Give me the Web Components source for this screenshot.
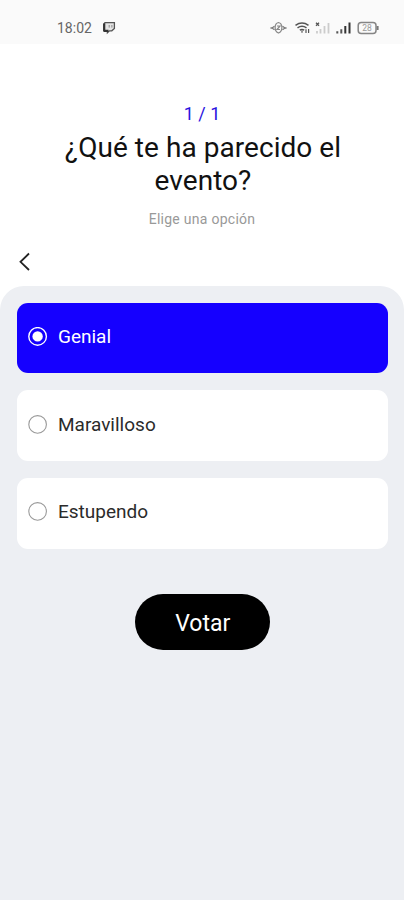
<!DOCTYPE html>
<html lang="es">
<head>
<meta charset="utf-8">
<title>Votación</title>
<style>
    body {
        margin: 0;
        background: #fff;
        color: #111;
        font-family: Roboto, "Liberation Sans", sans-serif;
    }
</style>
</head>
<body>
<poll-screen>
    <status-bar slot="status">18:02</status-bar>
    <poll-header slot="header">
        <span slot="count">1 / 1</span>
        <span slot="title">¿Qué te ha parecido el evento?</span>
        <span slot="hint">Elige una opción</span>
    </poll-header>
    <poll-option selected>Genial</poll-option>
    <poll-option>Maravilloso</poll-option>
    <poll-option>Estupendo</poll-option>
    <vote-button slot="action">Votar</vote-button>
</poll-screen>

<script>
customElements.define('poll-screen', class extends HTMLElement {
    constructor() {
        super();
        this.attachShadow({mode: "open"});
        this.shadowRoot.innerHTML = `
            <style>
                :host {
                    display: flex;
                    flex-direction: column;
                    height: 900px;
                    overflow: hidden;
                }
                main {
                    flex: 1;
                    display: flex;
                    flex-direction: column;
                    align-items: center;
                    box-sizing: border-box;
                    padding: 16.6px 16px 0 17.4px;
                    border-radius: 24px 24px 0 0;
                    background: #edeff3;
                }
                .options {
                    align-self: stretch;
                    display: flex;
                    flex-direction: column;
                    gap: 16.9px;
                    margin-bottom: 45.2px;
                }
            </style>
            <slot name="status"></slot>
            <slot name="header"></slot>
            <main>
                <div class="options"><slot></slot></div>
                <slot name="action"></slot>
            </main>
            `
    }
});

customElements.define('status-bar', class extends HTMLElement {
    constructor() {
        super();
        this.attachShadow({mode: "open"});
        this.shadowRoot.innerHTML = `
            <style>
                :host {
                    display: flex;
                    align-items: center;
                    box-sizing: border-box;
                    height: 44px;
                    padding: 11px 24px 0 57px;
                    background: #fafafa;
                    color: #666;
                    font-size: 14px;
                    line-height: 18px;
                }
                svg { display: block; flex: none; }
                .time { width: 45px; }
                .icons { margin-left: auto; }
            </style>
            <span class="time"><slot></slot></span>
            <svg width="14" height="14" viewBox="0 0 14 14">
                <path d="M3 1.6H12.4V7.4L9.8 9.8H7.5L5.4 11.8V9.8H2V3Z" fill="#e4e4e4" stroke="#555" stroke-width="1.3"/>
                <path d="M2.2 2.5V10M1.6 9.8H6.5" stroke="#333" stroke-width="2.2"/>
                <path d="M7.2 4V6.6M9.9 4V6.6" stroke="#888"/>
            </svg>
            <svg class="icons" width="110" height="16" viewBox="0 0 110 16">
                <!-- vibration -->
                <g fill="none" stroke="#888" stroke-width="1.2">
                    <path d="M8.5 2.5C13 3.5 13 11 8.5 13C4 11 4 3.5 8.5 2.5Z"/>
                    <path d="M7 6H10L7 9.5H10"/>
                    <path d="M4.5 6.2L2 8L4.5 9.8M12.5 6.2L15 8L12.5 9.8" stroke="#777"/>
                    <path d="M.4 8H2M15 8H16.6" stroke-width="1.6"/>
                </g>
                <!-- wifi -->
                <g fill="none" stroke="#555" stroke-width="1.5">
                    <path d="M25.5 5.4Q32 .8 38.5 5.4"/>
                    <path d="M27.5 7.8Q32 4.8 36.5 7.8"/>
                    <path d="M29.8 10.2Q32 8.8 34.2 10.2"/>
                    <path d="M32 10.5V12.8M36 9.2V13M38.6 9V13" stroke-width="1.2"/>
                </g>
                <!-- first sim, no signal -->
                <path d="M46 2.8L49 5.8M49 2.8L46 5.8" stroke="#555" stroke-width="1.3"/>
                <path d="M47 11V13.5M50.5 9V13.5M54.5 6V13.5M58.5 3V13.5" stroke="#ccc" stroke-width="1.8"/>
                <!-- second sim -->
                <path d="M67.3 11.2V13.5M71.3 9.2V13.5" stroke="#555" stroke-width="2"/>
                <path d="M75.3 6V13.5M79.5 2.5V13.5" stroke="#333" stroke-width="2"/>
                <!-- battery -->
                <rect x="88.2" y="2.4" width="17.8" height="11" rx="3" fill="none" stroke="#858585" stroke-width="1.5"/>
                <path d="M107.6 6V10" stroke="#777" stroke-width="2"/>
                <text x="97.1" y="11" text-anchor="middle" font-size="8.5" fill="#999">28</text>
            </svg>
            `
    }
});

customElements.define('poll-header', class extends HTMLElement {
    constructor() {
        super();
        this.attachShadow({mode: "open"});
        this.shadowRoot.innerHTML = `
            <style>
                :host {
                    display: flex;
                    flex-direction: column;
                    box-sizing: border-box;
                    height: 242px;
                    padding-top: 59px;
                    text-align: center;
                }
                .count {
                    margin-bottom: 6px;
                    color: #2a12e0;
                    font-size: 18px;
                    line-height: 22px;
                }
                h1 {
                    margin: 0 49px 13px 51px;
                    font-size: 28px;
                    font-weight: 400;
                    line-height: 33px;
                    letter-spacing: 0.05px;
                }
                .hint {
                    color: #999;
                    font-size: 14px;
                    line-height: 18px;
                    letter-spacing: 0.27px;
                }
                button {
                    align-self: flex-start;
                    margin: 24px 0 0 18px;
                    padding: 0;
                    border: 0;
                    background: none;
                }
                svg { display: block; }
            </style>
            <div class="count"><slot name="count"></slot></div>
            <h1><slot name="title"></slot></h1>
            <div class="hint"><slot name="hint"></slot></div>
            <button aria-label="Volver">
                <svg width="14" height="20" viewBox="0 0 14 20">
                    <path d="M11 1.5L2.5 9.8L11 18" fill="none" stroke="#222" stroke-width="1.8"/>
                </svg>
            </button>
            `
    }
});

customElements.define('poll-option', class extends HTMLElement {
    constructor() {
        super();
        this.attachShadow({mode: "open"});
        this.shadowRoot.innerHTML = `
            <style>
                :host {
                    display: flex;
                    align-items: center;
                    gap: 10px;
                    box-sizing: border-box;
                    height: 70.8px;
                    padding: 0 11px 2px 10.6px;
                    border-radius: 11px;
                    background: #fff;
                    color: #2b2b2b;
                    font-size: 19px;
                    line-height: 24px;
                    cursor: pointer;
                }
                :host([selected]) {
                    background: #1500ff;
                    color: #fff;
                }
                svg { display: block; flex: none; }
                .ring { fill: none; stroke: #999; stroke-width: 1.1; }
                .dot { display: none; fill: #fff; }
                :host([selected]) .ring { stroke: #fff; stroke-width: 1.4; }
                :host([selected]) .dot { display: block; }
            </style>
            <svg width="20" height="20" viewBox="0 0 20 20">
                <circle class="ring" cx="9.6" cy="9.4" r="8.8"/>
                <circle class="dot" cx="9.6" cy="9.4" r="5.2"/>
            </svg>
            <span><slot></slot></span>
            `
    }

    connectedCallback() {
        this.addEventListener('click', this.select);
    }

    disconnectedCallback() {
        this.removeEventListener('click', this.select);
    }

    select() {
        this.parentElement.querySelectorAll('poll-option').forEach(option => {
            option.toggleAttribute('selected', option === this);
        });
    }
});

customElements.define('vote-button', class extends HTMLElement {
    constructor() {
        super();
        this.attachShadow({mode: "open"});
        this.shadowRoot.innerHTML = `
            <style>
                :host { display: block; }
                button {
                    display: block;
                    width: 135px;
                    height: 56px;
                    padding: 4px 0 0;
                    border: 0;
                    border-radius: 28px;
                    background: #000;
                    color: #fff;
                    font: 400 23px/28px Roboto, "Liberation Sans", sans-serif;
                }
            </style>
            <button><slot></slot></button>
            `
    }
});
</script>
</body>
</html>
